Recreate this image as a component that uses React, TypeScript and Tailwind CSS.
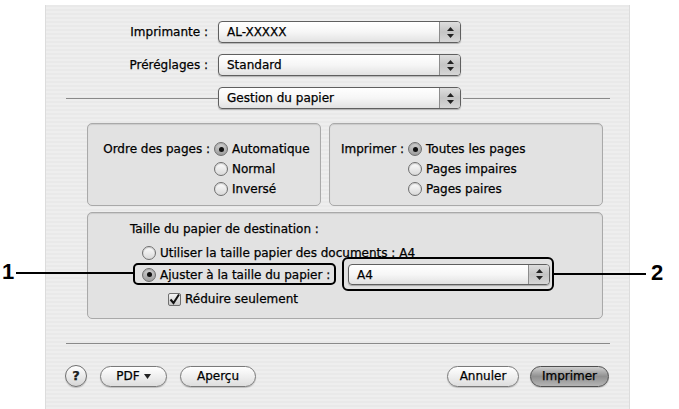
import React from "react";

const font = { fontFamily: '"DejaVu Sans", "Liberation Sans", sans-serif' };

function Stepper() {
  return (
    <div className="flex w-[21px] flex-col items-center justify-center gap-[3px] border-l border-[#8c8c8c] bg-linear-to-b from-[#dedede] via-[#c4c4c4] to-[#d6d6d6]">
      <svg width="7" height="4" viewBox="0 0 7 4">
        <path d="M3.5 0 L7 4 L0 4 Z" fill="#222" />
      </svg>
      <svg width="7" height="4" viewBox="0 0 7 4">
        <path d="M0 0 L7 0 L3.5 4 Z" fill="#222" />
      </svg>
    </div>
  );
}

function Popup({ label, className }: { label: string; className: string }) {
  return (
    <div
      className={
        "flex overflow-hidden rounded-[4px] border border-[#5f5f5f] bg-linear-to-b from-white via-[#f6f6f6] to-[#e2e2e2] shadow-[0_1px_1px_rgba(0,0,0,0.25)] " +
        className
      }
    >
      <div className="flex flex-1 items-center pl-[8px] text-[12px] text-black">{label}</div>
      <Stepper />
    </div>
  );
}

function Radio({ on }: { on?: boolean }) {
  return (
    <div
      className={
        "flex h-[14px] w-[14px] shrink-0 items-center justify-center rounded-full border border-[#6f6f6f] shadow-[inset_0_1px_1px_rgba(0,0,0,0.2)] " +
        (on ? "bg-linear-to-b from-[#d4d4d4] to-[#9c9c9c]" : "bg-linear-to-b from-[#fdfdfd] to-[#d9d9d9]")
      }
    >
      {on && <div className="h-[5px] w-[5px] rounded-full bg-[#111]" />}
    </div>
  );
}

function Option({ on, label }: { on?: boolean; label: string }) {
  return (
    <div className="flex h-[20px] items-center gap-[4px]">
      <Radio on={on} />
      <span className="whitespace-nowrap text-[12px] text-black">{label}</span>
    </div>
  );
}

function Pill({ children, className }: { children: React.ReactNode; className: string }) {
  return (
    <div
      className={
        "flex h-[21px] items-center justify-center rounded-full border text-[12px] text-black shadow-[0_1px_1px_rgba(0,0,0,0.2)] " +
        className
      }
    >
      {children}
    </div>
  );
}

export default function App() {
  return (
    <div className="relative h-[409px] w-[679px] overflow-hidden bg-white" style={font}>
      <div className="ml-[45px] mt-[5px] flex h-[404px] w-[585px] flex-col border-l border-r border-[#dcdcdc] bg-[repeating-linear-gradient(0deg,#eeeeee_0px,#eeeeee_2px,#e9e9e9_2px,#e9e9e9_4px)] [-webkit-text-stroke:0.25px_#000]">
        {/* printer & presets */}
        <div className="mt-[16px] grid grid-cols-[162px_243px] items-center gap-x-[10px] gap-y-[11px]">
          <span className="text-right text-[12px] text-black">Imprimante :</span>
          <Popup label="AL-XXXXX" className="h-[22px]" />
          <span className="text-right text-[12px] text-black">Préréglages :</span>
          <Popup label="Standard" className="h-[22px]" />
        </div>

        <div className="mt-[11px] flex items-center">
          <div className="ml-[20px] h-px w-[152px] bg-[#8a8a8a]" />
          <Popup label="Gestion du papier" className="h-[22px] w-[243px]" />
          <div className="ml-[2px] h-px w-[147px] bg-[#8a8a8a]" />
        </div>

        {/* page order / print */}
        <div className="ml-[41px] mt-[14px] flex gap-[8px]">
          <div className="flex h-[83px] w-[234px] items-start rounded-[5px] border border-[#a9a9a9] bg-[#e2e2e2] pl-[10px] pt-[15px] shadow-[inset_0_1px_1px_rgba(0,0,0,0.1)]">
            <span className="flex h-[20px] w-[112px] items-center justify-end text-[12px] text-black">
              Ordre des pages :
            </span>
            <div className="ml-[4px] flex flex-col">
              <Option on label="Automatique" />
              <Option label="Normal" />
              <Option label="Inversé" />
            </div>
          </div>
          <div className="flex h-[83px] w-[274px] items-start rounded-[5px] border border-[#a9a9a9] bg-[#e2e2e2] pl-[6px] pt-[15px] shadow-[inset_0_1px_1px_rgba(0,0,0,0.1)]">
            <span className="flex h-[20px] w-[68px] items-center justify-end text-[12px] text-black">Imprimer :</span>
            <div className="ml-[4px] flex flex-col">
              <Option on label="Toutes les pages" />
              <Option label="Pages impaires" />
              <Option label="Pages paires" />
            </div>
          </div>
        </div>

        {/* destination paper size */}
        <div className="ml-[41px] mt-[6px] flex h-[107px] w-[516px] flex-col rounded-[5px] border border-[#a9a9a9] bg-[#e2e2e2] pt-[6px] shadow-[inset_0_1px_1px_rgba(0,0,0,0.1)]">
          <span className="flex h-[20px] items-center pl-[42px] text-[12px] text-black">
            Taille du papier de destination :
          </span>
          <div className="mt-[4px] pl-[54px]">
            <Option label="Utiliser la taille papier des documents : A4" />
          </div>
          <div className="mt-[1px] flex items-center pl-[54px]">
            <div className="w-[206px]">
              <Option on label="Ajuster à la taille du papier :" />
            </div>
            <Popup label="A4" className="h-[21px] w-[202px]" />
          </div>
          <div className="mt-[4px] flex h-[20px] items-center gap-[4px] pl-[80px]">
            <div className="flex h-[13px] w-[13px] items-center justify-center rounded-[2px] border border-[#6f6f6f] bg-linear-to-b from-[#f4f4f4] to-[#c9c9c9]">
              <svg width="11" height="11" viewBox="0 0 11 11">
                <path d="M1.5 5.5 L4.5 9 L10 0.5" fill="none" stroke="#111" strokeWidth="2" />
              </svg>
            </div>
            <span className="text-[12px] text-black">Réduire seulement</span>
          </div>
        </div>

        <div className="ml-[20px] mt-[24px] h-px w-[544px] bg-[#8a8a8a]" />

        {/* buttons */}
        <div className="mt-[21px] flex items-center pl-[19px] pr-[20px]">
          <div className="flex h-[22px] w-[22px] items-center justify-center rounded-full border border-[#6f6f6f] bg-linear-to-b from-white to-[#d6d6d6] text-[13px] font-bold text-[#222] shadow-[0_1px_1px_rgba(0,0,0,0.2)]">
            ?
          </div>
          <Pill className="ml-[13px] w-[67px] gap-[4px] border-[#7a7a7a] bg-linear-to-b from-white to-[#dedede]">
            <span>PDF</span>
            <svg width="7" height="5" viewBox="0 0 7 5">
              <path d="M0 0 L7 0 L3.5 5 Z" fill="#222" />
            </svg>
          </Pill>
          <Pill className="ml-[13px] w-[76px] border-[#7a7a7a] bg-linear-to-b from-white to-[#dedede]">Aperçu</Pill>
          <div className="flex-1" />
          <Pill className="w-[72px] border-[#7a7a7a] bg-linear-to-b from-white to-[#dedede]">Annuler</Pill>
          <Pill className="ml-[11px] w-[79px] border-[#4f4f4f] bg-linear-to-b from-[#cfcfcf] via-[#909090] to-[#b5b5b5]">
            Imprimer
          </Pill>
        </div>
      </div>

      {/* callouts */}
      <div className="absolute left-[133px] top-[263px] h-[22px] w-[203px] rounded-[5px] border-2 border-black" />
      <div className="absolute left-[342px] top-[257px] h-[34px] w-[212px] rounded-[6px] border-2 border-black" />
      <div className="absolute left-[16px] top-[272px] h-[2px] w-[117px] bg-black" />
      <div className="absolute left-[554px] top-[273px] h-[2px] w-[92px] bg-black" />
      <span
        className="absolute left-[2px] top-[259px] text-[22px] font-bold leading-[26px] text-black"
        style={{ fontFamily: '"Liberation Sans", Arial, sans-serif' }}
      >
        1
      </span>
      <span
        className="absolute left-[651px] top-[260px] text-[22px] font-bold leading-[26px] text-black"
        style={{ fontFamily: '"Liberation Sans", Arial, sans-serif' }}
      >
        2
      </span>
    </div>
  );
}
